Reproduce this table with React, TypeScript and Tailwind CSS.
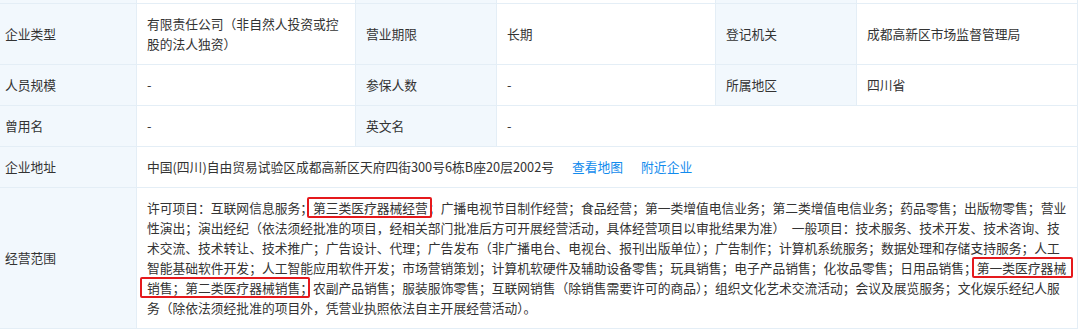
import React from 'react'

type Cell = { label: string; value: React.ReactNode; span?: number }

const font = { fontFamily: '"Noto Sans CJK SC", "Noto Sans", sans-serif' }

function Mark({ children, l = 5, r = 4 }: { children: React.ReactNode; l?: number; r?: number }) {
  return (
    <span className="relative">
      {children}
      <span
        className="pointer-events-none absolute -top-[1px] -bottom-[1px] rounded-[2px] border-2 border-[#e5191c]"
        style={{ left: -l, right: -r }}
      />
    </span>
  )
}

const rows: Cell[][] = [
  [
    { label: '企业类型', value: '有限责任公司（非自然人投资或控股的法人独资）' },
    { label: '营业期限', value: '长期' },
    { label: '登记机关', value: '成都高新区市场监督管理局' },
  ],
  [
    { label: '人员规模', value: '-' },
    { label: '参保人数', value: '-' },
    { label: '所属地区', value: '四川省' },
  ],
  [
    { label: '曾用名', value: '-' },
    { label: '英文名', value: '-', span: 3 },
  ],
  [
    {
      label: '企业地址',
      span: 5,
      value: (
        <>
          中国(四川)自由贸易试验区成都高新区天府四街300号6栋B座20层2002号
          <a className="ml-[18px] text-[#128bed]">查看地图</a>
          <a className="ml-[18px] text-[#128bed]">附近企业</a>
        </>
      ),
    },
  ],
  [
    {
      label: '经营范围',
      span: 5,
      value: (
        <>
          许可项目：互联网信息服务；<Mark l={6} r={4}>第三类医疗器械经营</Mark>；广播电视节目制作经营；食品经营；第一类增值电信业务；第二类增值电信业务；药品零售；出版物零售；营业性演出；演出经纪（依法须经批准的项目，经相关部门批准后方可开展经营活动，具体经营项目以审批结果为准）　一般项目：技术服务、技术开发、技术咨询、技术交流、技术转让、技术推广；广告设计、代理；广告发布（非广播电台、电视台、报刊出版单位）；广告制作；计算机系统服务；数据处理和存储支持服务；人工智能基础软件开发；人工智能应用软件开发；市场营销策划；计算机软硬件及辅助设备零售；玩具销售；电子产品销售；化妆品零售；日用品销售；<Mark l={5} r={7}>第一类医疗器械</Mark><Mark l={7} r={-3}>销售；第二类医疗器械销售；</Mark>农副产品销售；服装服饰零售；互联网销售（除销售需要许可的商品）；组织文化艺术交流活动；会议及展览服务；文化娱乐经纪人服务（除依法须经批准的项目外，凭营业执照依法自主开展经营活动）。
        </>
      ),
    },
  ],
]

export default function App() {
  return (
    <div className="h-[335px] w-[1080px] overflow-hidden bg-white text-[12.77px] leading-[20px] text-[#333]" style={font}>
      <table className="-ml-[6px] w-[1083px] table-fixed border-collapse">
        <colgroup>
          <col className="w-[142px]" />
          <col className="w-[219px]" />
          <col className="w-[141px]" />
          <col className="w-[219px]" />
          <col className="w-[141px]" />
          <col className="w-[221px]" />
        </colgroup>
        <tbody>
          <tr className="h-[3px]">
            {[0, 1, 2, 3, 4, 5].map((i) => (
              <td key={i} className={`border-x border-b border-[#e4eef6] p-0 ${i % 2 === 0 ? 'bg-[#f2f8fd]' : ''}`} />
            ))}
          </tr>
          {rows.map((row, ri) => (
            <tr key={ri}>
              {row.map((c) => (
                <React.Fragment key={c.label}>
                  <td className="border border-[#e4eef6] bg-[#f2f8fd] px-[10px] py-[10px] align-middle">{c.label}</td>
                  <td colSpan={c.span ?? 1} className="border border-[#e4eef6] px-[10px] py-[10px] align-middle break-all">
                    {c.value}
                  </td>
                </React.Fragment>
              ))}
            </tr>
          ))}
        </tbody>
      </table>
    </div>
  )
}
